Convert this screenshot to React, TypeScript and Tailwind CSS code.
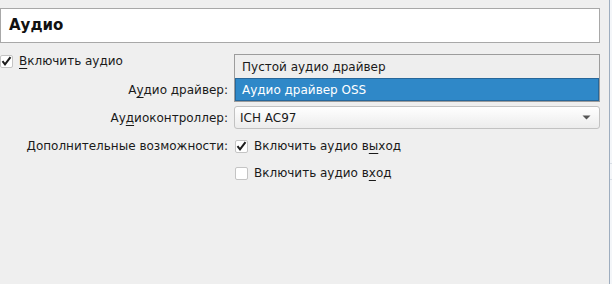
import { ReactNode } from "react";

const FONT = "font-['DejaVu_Sans',sans-serif]";

function Mn({ children }: { children: ReactNode }) {
  return <span className="underline underline-offset-[3px] decoration-1">{children}</span>;
}

function CheckBox({ checked }: { checked: boolean }) {
  return (
    <span className="flex h-[13px] w-[13px] shrink-0 items-center justify-center rounded-[2px] border border-[#c4c4c4] bg-white">
      {checked && (
        <svg width="11" height="10" viewBox="0 0 11 10">
          <path d="M1.5 5.2 L4 8.3 L9.5 1.2" fill="none" stroke="#1c1c1c" strokeWidth="2" />
        </svg>
      )}
    </span>
  );
}

function Combo({ value }: { value: string }) {
  return (
    <div className="flex h-[23px] w-full items-center justify-between rounded-[3px] border border-[#c2c2c2] bg-gradient-to-b from-white to-[#ececec] pl-[5px] pr-[8px]">
      <span>{value}</span>
      <svg width="9" height="5" viewBox="0 0 9 5">
        <path d="M0.5 0.5 H8.5 L4.5 4.5 Z" fill="#555" />
      </svg>
    </div>
  );
}

export default function App() {
  return (
    <div className={`flex h-[284px] w-[612px] bg-[#efefef] text-[12px] text-[#1a1a1a] ${FONT}`}>
      <div className="flex w-[609px] flex-col pr-[9px] pt-[8px]">
        {/* Section title */}
        <div className="flex h-[35px] items-center border border-[#a8a8a8] bg-white pl-[8px] text-[15px] font-bold text-[#111]">
          Аудио
        </div>

        {/* Enable audio */}
        <div className="mt-[7px] flex h-[22px] items-center gap-[6px]">
          <CheckBox checked />
          <span>
            <Mn>В</Mn>ключить аудио
          </span>
        </div>

        <div className="grid grid-cols-[228px_1fr] gap-x-[6px]">
          {/* Driver */}
          <div className="mt-[6px] flex h-[23px] items-center justify-end">
            <span>
              А<Mn>у</Mn>дио драйвер:
            </span>
          </div>
          <div className="relative mt-[6px] h-[23px]">
            {/* Open drop-down list covering the driver combo */}
            <div className="absolute left-0 right-0 top-[-24px] z-10 flex flex-col border border-[#9c9c9c] bg-[#eeeeee]">
              <div className="flex h-[23px] items-center pl-[7px]">Пустой аудио драйвер</div>
              <div className="flex h-[23px] items-center border border-[#27679a] bg-[#2f88c8] pl-[6px] text-white">
                Аудио драйвер OSS
              </div>
            </div>
          </div>

          {/* Controller */}
          <div className="mt-[5px] flex h-[23px] items-center justify-end">
            <span>
              Ау<Mn>д</Mn>иоконтроллер:
            </span>
          </div>
          <div className="mt-[5px]">
            <Combo value="ICH AC97" />
          </div>

          {/* Extended features */}
          <div className="mt-[6px] flex h-[22px] items-center justify-end">
            <span>Дополнительные возможности:</span>
          </div>
          <div className="mt-[6px] flex h-[22px] items-center gap-[6px] pl-[1px]">
            <CheckBox checked />
            <span>
              Включить аудио в<Mn>ы</Mn>ход
            </span>
          </div>

          <div className="mt-[5px] h-[22px]" />
          <div className="mt-[5px] flex h-[22px] items-center gap-[6px] pl-[1px]">
            <CheckBox checked={false} />
            <span>
              Включить аудио в<Mn>х</Mn>од
            </span>
          </div>
        </div>
      </div>

      {/* Neighbouring pane edge */}
      <div className="flex w-[3px] flex-col border-l border-[#9eadbf] bg-[#f4f6f9]">
        <div className="h-[163px]" />
        <div className="h-[17px] border-y border-[#d8dee6]" />
      </div>
    </div>
  );
}
